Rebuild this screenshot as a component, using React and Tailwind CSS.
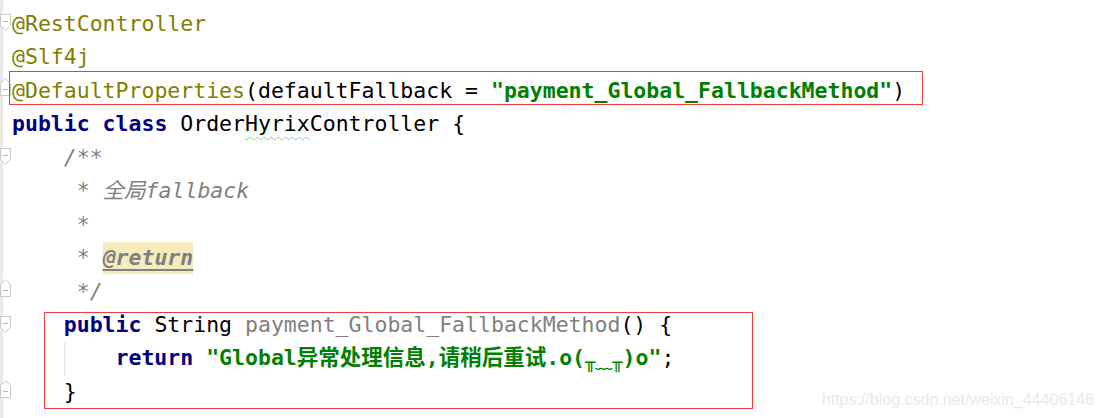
import React from 'react';

const A = ({ children }) => <span className="text-[#808000]">{children}</span>;
const K = ({ children }) => <span className="font-bold text-[#000080]">{children}</span>;
const S = ({ children }) => <span className="font-bold text-[#008000]">{children}</span>;
const C = ({ children }) => <span className="italic text-[#808080]">{children}</span>;

function FoldStart() {
  return (
    <svg width="12" height="18" viewBox="0 0 12 18" className="mt-[7px] shrink-0 block">
      <polygon points="0.5,0.5 10.5,0.5 10.5,11.5 5.5,16.5 0.5,11.5" fill="#fff" stroke="#c8c8c8" />
      <line x1="3" y1="7.5" x2="8" y2="7.5" stroke="#b8b8b8" />
    </svg>
  );
}

function FoldEnd() {
  return (
    <svg width="12" height="18" viewBox="0 0 12 18" className="mt-[4px] shrink-0 block">
      <polygon points="5.5,0.5 10.5,5.5 10.5,17.5 0.5,17.5 0.5,5.5" fill="#fff" stroke="#c8c8c8" />
      <line x1="3" y1="11.5" x2="8" y2="11.5" stroke="#b8b8b8" />
    </svg>
  );
}

const lines = [
  { fold: 'start', code: <A>@RestController</A> },
  { code: <A>@Slf4j</A> },
  {
    fold: 'end',
    code: (
      <>
        <A>@DefaultProperties</A>(defaultFallback = <S>"payment_Global_FallbackMethod"</S>)
      </>
    ),
  },
  {
    code: (
      <>
        <K>public class</K> Order
        <span className="underline decoration-wavy decoration-[#8fcf8f] decoration-1 underline-offset-[5px]">Hyrix</span>
        Controller {'{'}
      </>
    ),
  },
  { fold: 'start', code: <>{'    '}<C>/**</C></> },
  { code: <>{'     '}<C>* 全局fallback</C></> },
  { code: <>{'     '}<C>*</C></> },
  {
    code: (
      <>
        {'     '}
        <C>* </C>
        <span className="inline-block h-[32px] leading-[32px] bg-[#f6ebbc] italic font-bold text-[#808080] underline underline-offset-[4px]">
          @return
        </span>
      </>
    ),
  },
  { fold: 'end', code: <>{'     '}<C>*/</C></> },
  {
    fold: 'start',
    code: (
      <>
        {'    '}<K>public</K> String <span className="text-[#808080]">payment_Global_FallbackMethod</span>() {'{'}
      </>
    ),
  },
  {
    code: (
      <>
        <span className="inline-block w-[4ch]"> </span>
        <span className="inline-block w-[4ch] h-[33.5px] border-l border-[#e2e2e2]"> </span>
        <K>return</K>{' '}
        <S>
          "Global异常处理信息,请稍后重试.o(
          <span className="text-[17px] relative top-[3px]">╥﹏╥</span>)o"
        </S>
        ;
      </>
    ),
  },
  { fold: 'end', code: <>{'    }'}</> },
];

export default function App() {
  return (
    <div className="relative w-[1104px] h-[418px] bg-white overflow-hidden">
      <div
        className="flex h-full text-black text-[21.5px]"
        style={{ fontFamily: '"DejaVu Sans Mono", "Noto Sans CJK SC", monospace' }}
      >
        <div className="w-[12px] shrink-0 h-full pt-[7px] bg-[linear-gradient(to_right,#e9e9e9_3px,transparent_3px)]">
          {lines.map((l, i) => (
            <div key={i} className="h-[33.5px] flex items-start">
              {l.fold === 'start' && <FoldStart />}
              {l.fold === 'end' && <FoldEnd />}
            </div>
          ))}
        </div>
        <div className="pt-[7px]">
          {lines.map((l, i) => (
            <div key={i} className="h-[33.5px] flex items-center whitespace-pre">
              <span>{l.code}</span>
            </div>
          ))}
        </div>
      </div>

      <div className="absolute left-[9px] top-[71px] w-[914px] h-[34px] border border-[#f23a3a]" />
      <div className="absolute left-[44px] top-[312px] w-[709px] h-[97px] border border-[#f23a3a]" />

      <div
        className="absolute right-[10px] bottom-[9px] text-[16px] leading-[18px] text-[#e9e9e9]"
        style={{ fontFamily: '"Liberation Sans", Arial, sans-serif' }}
      >
        https://blog.csdn.net/weixin_44406146
      </div>
    </div>
  );
}
